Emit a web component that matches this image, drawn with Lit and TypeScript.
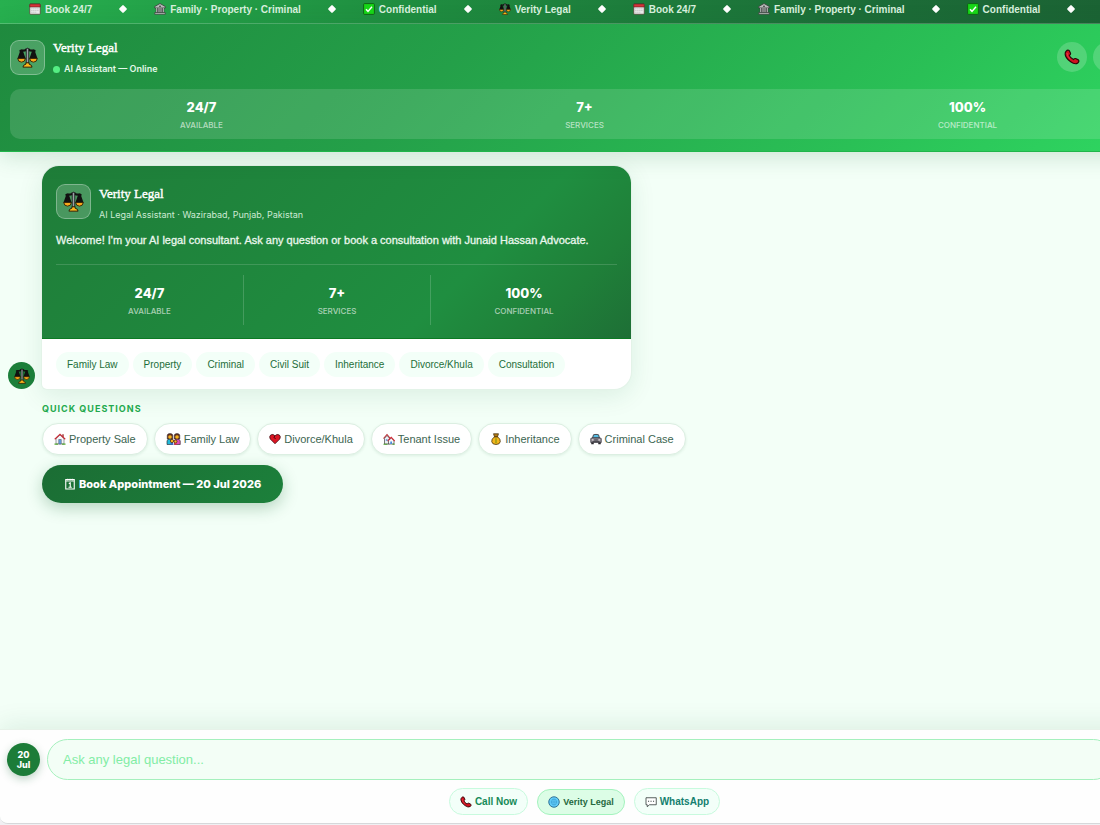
import { LitElement, html, css, svg } from "lit";
import { customElement, state } from "lit/decorators.js";

const glyphs: Record<string, unknown> = {
  scales: svg`
    <path d="M4 4.500 9 4q3-3 6 0l5 .5" fill="none" stroke="#111" stroke-width="2.600" stroke-linecap="round"/>
    <path d="M5.200 4.500 2.200 13h6z" fill="#17140f" stroke="#111" stroke-width="3" stroke-linejoin="round"/>
    <path d="M18.800 4.500l-3 8.500h6z" fill="#17140f" stroke="#111" stroke-width="3" stroke-linejoin="round"/>
    <path d="M.8 13h8.800q-.4 4.300-4.400 4.300T.8 13z" fill="#f9a91a" stroke="#2a1c06" stroke-width="1"/>
    <path d="M14.400 13h8.800q-.4 4.300-4.400 4.300t-4.400-4.300z" fill="#f9a91a" stroke="#2a1c06" stroke-width="1"/>
    <path d="M10.600 2.600q1.400-2.400 2.800 0v16h-2.800z" fill="#9ba0a6" stroke="#111" stroke-width=".9"/>
    <path d="M6.800 23q.2-2.800 3.400-3.400V18h3.600v1.600q3.200.6 3.400 3.400z" fill="#fcb71c" stroke="#2a1c06" stroke-width="1.100" stroke-linejoin="round"/>`,
  calendar: svg`
    <rect x="1.500" y="2" width="21" height="20.500" rx="1.500" fill="#ececec" stroke="#55382f" stroke-width="1.400"/>
    <path d="M1.500 3.500Q1.500 2 3 2h18q1.500 0 1.500 1.500V8h-21z" fill="#d8343a" stroke="#55231f" stroke-width="1.200"/>
    <path d="M4.500 11.500h15M4.500 15h15M4.500 18.500h10" stroke="#bdbdbd" stroke-width="1.600" stroke-dasharray="2.500 1.500"/>`,
  bank: svg`
    <path d="M12 1 1.500 7v3h21V7z" fill="#b9bdbb" stroke="#3a3d3c" stroke-width="1.600" stroke-linejoin="round"/>
    <circle cx="12" cy="6.500" r="1.700" fill="#3a3d3c"/>
    <path d="M3.500 10h17v9h-17z" fill="#3a3d3c"/>
    <path d="M5.500 10v9M10 10v9M14 10v9M18.500 10v9" stroke="#c9cdcb" stroke-width="2"/>
    <path d="M1.500 19h21v3.500h-21z" fill="#b9bdbb" stroke="#3a3d3c" stroke-width="1.400"/>`,
  check: svg`
    <rect x="1.200" y="1.200" width="21.600" height="21.600" rx="2" fill="#18d818" stroke="#0e5c14" stroke-width="1.800"/>
    <path d="m6 12.500 4 4.200 8-9.200" fill="none" stroke="#fff" stroke-width="2.800"/>`,
  phone: svg`
    <path d="M3 3.500Q5.500.5 8 2.500l1.800 4q.4 1.600-1.900 3.100 1.500 4 6.300 6.300 1.700-2.200 3.200-1.600l4.100 2q2 2.200-.9 4.700-4 3-10.600-1.800Q2 13.500 1.700 7.700 1.700 5 3 3.500z" fill="#d0121f" stroke="#2a0608" stroke-width="1.700" stroke-linejoin="round"/>
    <path d="M4.500 6q.4 5.500 5 9.500" fill="none" stroke="#f2525b" stroke-width="1"/>`,
  house: svg`
    <path d="M4 11v11h16V11l-8-7z" fill="#f4f5f7" stroke="#6c7077" stroke-width="1.400"/>
    <path d="M16.500 2.500h3v6h-3z" fill="#a34040"/>
    <path d="m1.500 12.500 10.500-10 10.500 10" fill="none" stroke="#c92b36" stroke-width="2.200"/>
    <path d="M9.500 22v-9h5v9z" fill="#63a9e8" stroke="#445" stroke-width="1"/>
    <path d="M1 22.200h7m8 0h7" stroke="#54a832" stroke-width="2.600"/>`,
  family: svg`
    <path d="M1 23v-7q.5-4 5.500-4t5.500 4v7z" fill="#22b8d8" stroke="#221b20" stroke-width="1.200"/>
    <path d="M16 23v-7q.5-4 5.500-4t6 4v7z" fill="#df4eb8" stroke="#221b20" stroke-width="1.200"/>
    <path d="M1.500 12V4q.5-3 5.500-3t5.500 3v8z" fill="#64301f" stroke="#221b20"/>
    <path d="M15.500 12V4q1-3 5.500-3t5.500 3v8z" fill="#64301f" stroke="#221b20"/>
    <circle cx="7" cy="8" r="3.600" fill="#f6b51e"/><circle cx="21" cy="8" r="3.600" fill="#f6b51e"/>
    <circle cx="11" cy="16" r="3.300" fill="#f6b51e" stroke="#5b2a18" stroke-width="1.600"/>
    <circle cx="18" cy="17" r="3" fill="#f6b51e" stroke="#5b2a18" stroke-width="1.600"/>
    <path d="M7.500 23.500q.5-4 3.500-4t3.500 4z" fill="#3a62c8"/><path d="M15 23.500q.5-3.500 3-3.500t3 3.500z" fill="#d92c42"/>`,
  heart: svg`
    <path d="M12 21.500 2.500 12Q-.2 7 3.500 3.800 8 1.200 12 5.500q4-4.300 8.500-1.700Q24.200 7 21.500 12z" fill="#db1624" stroke="#3a080d" stroke-width="1.500" stroke-linejoin="round"/>
    <path d="m12 5.500-2.200 3.700 3.600 2" fill="none" stroke="#2a0508" stroke-width="1.600"/>`,
  houses: svg`
    <path d="M3 10.500V22h10V10.500L8 5z" fill="#eceff2" stroke="#333" stroke-width="1.300"/>
    <path d="m1 11 7-8 6 7" fill="none" stroke="#b92a33" stroke-width="2.200"/>
    <path d="M11 15v7h11v-7l-5.500-5z" fill="#f7f7f9" stroke="#333" stroke-width="1.300"/>
    <path d="m9 16 7.500-7.500L23.500 16" fill="none" stroke="#d22c38" stroke-width="2.200"/>
    <path d="M5.500 12.500H9v3H5.500zM14.500 17H18v5h-3.500z" fill="#4d8fda"/>
    <path d="M1 22.500h8m10 0h4.500" stroke="#4ca32f" stroke-width="2.400"/>`,
  moneybag: svg`
    <path d="M7 1.500h10l-2 6H9z" fill="#b07a14" stroke="#3d2a0b" stroke-width="1.400" stroke-linejoin="round"/>
    <path d="M9 7.500h6q6.500 4.500 5.500 10-1 5.500-8.500 5.500t-8.500-5.500q-1-5.500 5.500-10z" fill="#f3b61c" stroke="#3d2a0b" stroke-width="1.500"/>
    <path d="M8 7.500h8" stroke="#6d470e" stroke-width="2"/>
    <path d="M12 10.500v10" fill="none" stroke="#8b9b12" stroke-width="2.600"/>`,
  car: svg`
    <path d="M5 10 7 3.500q5-1.500 10 0L19 10z" fill="#57bfe6" stroke="#3c3a41" stroke-width="1.800"/>
    <path d="M1.500 11.500q1-2 3-2h15q2 0 3 2V19h-21z" fill="#85838c" stroke="#3c3a41" stroke-width="1.500"/>
    <path d="M2.500 19h5v3.500h-5zM16.500 19h5v3.500h-5z" fill="#29272d"/>
    <path d="M3.500 12.500h3.500V15H3.500zM17 12.500h3.500V15H17z" fill="#e8d9dd"/>
    <path d="M8.500 14h7M5 17h14" stroke="#38363c" stroke-width="1.500"/>`,
  planner: svg`
    <path d="M3.500 3h17v19h-17z" fill="none" stroke="#fff" stroke-width="2.200"/>
    <path d="M3.500 6h17M7.500 1.500V5m4.500-3.500V5m4.500-3.500V5" stroke="#fff" stroke-width="1.800"/>
    <path d="M9.500 11 12.500 9.800v8M9 18.500h6.500" fill="none" stroke="#fff" stroke-width="2.200"/>`,
  globe: svg`
    <circle cx="12" cy="12" r="10.500" fill="#5fcbf8" stroke="#2f6f94" stroke-width="1.900"/>
    <ellipse cx="12" cy="12" rx="5" ry="6" fill="none" stroke="#3a9fd2" stroke-width="1.400"/>
    <path d="M5.500 12h13M12 6v12" stroke="#3a9fd2" stroke-width="1.100"/>`,
  chat: svg`
    <path d="M2 3.500h20.500v14H9l-4.500 4v-4H2z" fill="#fff" stroke="#3b4443" stroke-width="1.700" stroke-linejoin="round"/>
    <path d="M6 10.500h2.200m2.800 0h2.200m2.800 0h2.200" stroke="#3b4443" stroke-width="2.200"/>`,
  send: svg`<path d="m2 3 20 9-20 9 3-9z" fill="#fff"/>`,
};

const icon = (name: string, cls = "") => html`<svg
  class="icon ${cls}"
  viewBox="0 0 ${name === "family" ? 28 : 24} 24"
  aria-hidden="true"
>${glyphs[name]}</svg>`;

const tickerItems = [
  ["calendar", "Book 24/7"],
  ["bank", "Family · Property · Criminal"],
  ["check", "Confidential"],
  ["scales", "Verity Legal"],
];

const figures = [
  ["24/7", "Available"],
  ["7+", "Services"],
  ["100%", "Confidential"],
];

const services = ["Family Law", "Property", "Criminal", "Civil Suit", "Inheritance", "Divorce/Khula", "Consultation"];

const questions = [
  ["house", "Property Sale"],
  ["family", "Family Law"],
  ["heart", "Divorce/Khula"],
  ["houses", "Tenant Issue"],
  ["moneybag", "Inheritance"],
  ["car", "Criminal Case"],
];

@customElement("app-root")
export class AppRoot extends LitElement {
  @state() private draft = "";

  static styles = css`
    :host {
      display: block;
      height: 100vh;
      overflow: hidden;
      background: #f0f0f3;
      font-family: "Liberation Sans", Arial, sans-serif;
      color: #fff;
    }
    * { box-sizing: border-box; }
    button, input { font: inherit; color: inherit; margin: 0; }
    button { cursor: pointer; border: 0; padding: 0; }
    .shell {
      width: calc(100% + 69px);
      height: calc(100vh - 1px);
      display: flex;
      flex-direction: column;
      background: #f3fff7;
      border-bottom: 1px solid #d6d8da;
      border-radius: 0 0 8px 8px;
      overflow: hidden;
    }
    .icon { width: 12px; height: 12px; flex: none; display: block; }
    .icon.wide { width: 15px; }
    .icon.large { width: 21px; height: 21px; }
    .icon.medium { width: 16px; height: 16px; }

    .ticker {
      flex: none;
      height: 24px;
      padding: 0 29px 5px;
      display: flex;
      align-items: center;
      gap: 27px;
      overflow: hidden;
      white-space: nowrap;
      font-size: 10px;
      font-weight: 700;
      color: #d8f0de;
      background: linear-gradient(90deg, #27b04f 0%, #1f8e40 34%, #1c6e38 72%, #1b6033 100%);
      border-bottom: 1px solid #ffffff38;
    }
    .ticker-item { display: flex; align-items: center; gap: 4px; flex: none; }
    .diamond { width: 6px; height: 6px; margin: 0 1px; flex: none; background: #fff; transform: rotate(45deg); border-radius: 1px; }

    .header {
      flex: none;
      position: relative;
      padding: 16px 10px 12px;
      background: linear-gradient(135deg, #1f8a3e 0%, #24a049 38%, #2ac056 75%, #2fd862 100%);
      border-bottom: 1px solid #20b64a;
      box-shadow: 0 4px 22px #1466342e;
    }
    .brand { display: flex; align-items: flex-start; gap: 8px; }
    .logo {
      width: 35px;
      height: 35px;
      flex: none;
      display: grid;
      place-items: center;
      border: 1px solid #ffffff4d;
      border-radius: 9px;
      background: #ffffff30;
    }
    .brand-text { flex: 1; display: grid; gap: 7px; }
    .name {
      margin: 0;
      font-family: "Liberation Serif", serif;
      font-size: 13px;
      font-weight: 400;
      line-height: 16px;
      -webkit-text-stroke: 0.4px currentColor;
    }
    .status { display: flex; align-items: center; gap: 4px; font-family: Inter, sans-serif; font-size: 9px; line-height: 12px; font-weight: 600; color: #e2f8e8; }
    .dot { width: 7px; height: 7px; border-radius: 50%; background: #55ee83; }
    .actions { display: flex; gap: 6px; padding-top: 2px; }
    .round { width: 30px; height: 30px; border-radius: 50%; background: #ffffff2e; display: grid; place-items: center; }

    .figures { display: grid; grid-template-columns: repeat(3, 1fr); text-align: center; font-family: Inter, sans-serif; }
    .figure { display: grid; gap: 4px; padding: 10px 0 8px; }
    .figure strong { font-size: 13px; line-height: 16px; font-weight: 800; }
    .figure span { font-size: 8px; line-height: 12px; font-weight: 500; text-transform: uppercase; color: #ffffffa0; }
    .header .figures { margin-top: 14px; border-radius: 10px; background: #ffffff21; }

    .chat {
      flex: 1;
      min-height: 0;
      padding: 14px 8px;
      display: flex;
      flex-direction: column;
      overflow: hidden;
    }
    .message { display: flex; align-items: flex-end; gap: 7px; }
    .avatar { width: 27px; height: 27px; flex: none; border-radius: 50%; background: #1c7f3a; display: grid; place-items: center; }
    .card {
      flex: 1;
      max-width: 589px;
      overflow: hidden;
      border-radius: 17px 17px 17px 5px;
      background: #fff;
      box-shadow: 0 0 0 1px #e3f3e8, 0 6px 26px #1466341c;
    }
    .hero {
      padding: 18px 14px 13px;
      background: linear-gradient(135deg, #1f7d39 0%, #1f8e40 70%, #1f8039 86%, #1e6f36 100%);
      border-bottom: 1px solid #0b7a23;
    }
    .hero .brand-text { padding-top: 2px; }
    .place { font-family: Inter, sans-serif; font-size: 9px; line-height: 12px; font-weight: 400; color: #cdead4; }
    .welcome { margin: 11px 0 0; font-size: 11px; line-height: 16px; color: #eaf7ed; -webkit-text-stroke: 0.3px currentColor; }
    .hero .figures { margin-top: 16px; padding-top: 10px; border-top: 1px solid #ffffff26; }
    .hero .figure + .figure { border-left: 1px solid #ffffff2b; }
    .tags { display: flex; flex-wrap: wrap; gap: 4px; padding: 13px 14px 12px; }
    .tag { padding: 0 11px; line-height: 25px; border-radius: 13px; background: #f3fff8; color: #1d6e38; font-size: 10px; white-space: nowrap; }

    .quick { padding: 14px 0 0 34px; display: grid; gap: 8px; justify-items: start; }
    .quick-title { margin: 0; font-family: Inter, sans-serif; font-size: 9px; line-height: 12px; font-weight: 700; letter-spacing: 1px; text-transform: uppercase; color: #23a94d; }
    .chips { display: flex; flex-wrap: wrap; gap: 6px; }
    .chip {
      height: 32px;
      padding: 0 11px;
      display: flex;
      align-items: center;
      gap: 3px;
      border: 1px solid #dcefe2;
      border-radius: 16px;
      background: #fff;
      color: #3c6551;
      font-size: 11px;
      box-shadow: 0 1px 3px #1466341a;
      white-space: nowrap;
    }
    .book {
      height: 38px;
      margin-top: 2px;
      padding: 0 22px;
      display: flex;
      align-items: center;
      gap: 3px;
      border-radius: 19px;
      background: linear-gradient(135deg, #1b6d34, #1c803b);
      color: #fff;
      font-family: Inter, sans-serif;
      font-size: 11px;
      font-weight: 800;
      box-shadow: 0 5px 16px #14663447;
      white-space: nowrap;
    }

    .composer {
      flex: none;
      padding: 9px 7px 8px;
      background: #fefefe;
      border-top: 1px solid #e7f2e9;
      box-shadow: 0 -4px 24px #1466341a;
    }
    .entry { display: flex; align-items: center; gap: 7px; }
    .date {
      width: 33px;
      height: 33px;
      flex: none;
      border-radius: 50%;
      background: #1c7c38;
      font-family: Inter, sans-serif;
      font-size: 9px;
      line-height: 10px;
      font-weight: 800;
      box-shadow: 0 3px 9px #14663447;
    }
    .date span { display: block; }
    .input {
      flex: 1;
      min-width: 0;
      height: 41px;
      padding: 0 15px;
      border: 1px solid #a5f0bd;
      border-radius: 21px;
      outline: 0;
      background: #f3fef6;
      color: #1d6e38;
      font-size: 13px;
    }
    .input::placeholder { color: #82eda5; opacity: 1; }
    .send { width: 41px; height: 41px; flex: none; border-radius: 50%; background: #1c803b; display: grid; place-items: center; }
    .links { display: flex; justify-content: center; align-items: center; gap: 9px; margin-top: 8px; }
    .link {
      height: 27px;
      padding: 0 10px;
      display: flex;
      align-items: center;
      gap: 3px;
      border: 1px solid #c8fade;
      border-radius: 14px;
      background: #f3fff9;
      color: #168b58;
      font-size: 10px;
      font-weight: 700;
      text-decoration: none;
      white-space: nowrap;
    }
    .link.site { height: 26px; border-color: #a3f3bd; background: #dcfde6; color: #25693e; font-size: 9px; }
    .link.whatsapp { color: #14806f; }
  `;

  private figures() {
    return html`<div class="figures">
      ${figures.map(([value, label]) => html`<div class="figure"><strong>${value}</strong><span>${label}</span></div>`)}
    </div>`;
  }

  private onInput(e: Event) {
    this.draft = (e.target as HTMLInputElement).value;
  }

  render() {
    return html`
      <div class="shell">
        <div class="ticker">
          ${[...tickerItems, ...tickerItems].map(
            ([glyph, label]) => html`<span class="ticker-item">${icon(glyph)}${label}</span><i class="diamond"></i>`
          )}
        </div>
        <header class="header">
          <div class="brand">
            <div class="logo">${icon("scales", "large")}</div>
            <div class="brand-text">
              <h1 class="name">Verity Legal</h1>
              <div class="status"><i class="dot"></i>AI Assistant — Online</div>
            </div>
            <div class="actions">
              <button class="round" aria-label="Call">${icon("phone", "medium")}</button>
              <button class="round" aria-label="Chat">${icon("chat", "medium")}</button>
              <button class="round" aria-label="Book">${icon("calendar", "medium")}</button>
            </div>
          </div>
          ${this.figures()}
        </header>
        <main class="chat">
          <div class="message">
            <div class="avatar">${icon("scales", "medium")}</div>
            <article class="card">
              <div class="hero">
                <div class="brand">
                  <div class="logo">${icon("scales", "large")}</div>
                  <div class="brand-text">
                    <h2 class="name">Verity Legal</h2>
                    <div class="place">AI Legal Assistant · Wazirabad, Punjab, Pakistan</div>
                  </div>
                </div>
                <p class="welcome">Welcome! I'm your AI legal consultant. Ask any question or book a consultation with Junaid Hassan Advocate.</p>
                ${this.figures()}
              </div>
              <div class="tags">${services.map((s) => html`<span class="tag">${s}</span>`)}</div>
            </article>
          </div>
          <section class="quick">
            <h3 class="quick-title">Quick Questions</h3>
            <div class="chips">
              ${questions.map(
                ([glyph, label]) => html`<button class="chip">${icon(glyph, glyph === "family" ? "wide" : "")}${label}</button>`
              )}
            </div>
            <button class="book">${icon("planner")}Book Appointment — 20 Jul 2026</button>
          </section>
        </main>
        <footer class="composer">
          <div class="entry">
            <button class="date"><span>20</span><span>Jul</span></button>
            <input class="input" type="text" aria-label="Ask any legal question" placeholder="Ask any legal question..." .value=${this.draft} @input=${this.onInput} />
            <button class="send" aria-label="Send">${icon("send", "medium")}</button>
          </div>
          <nav class="links">
            <a class="link" href="#call">${icon("phone")}Call Now</a>
            <a class="link site" href="#site">${icon("globe")}Verity Legal</a>
            <a class="link whatsapp" href="#whatsapp">${icon("chat")}WhatsApp</a>
          </nav>
        </footer>
      </div>
    `;
  }
}
